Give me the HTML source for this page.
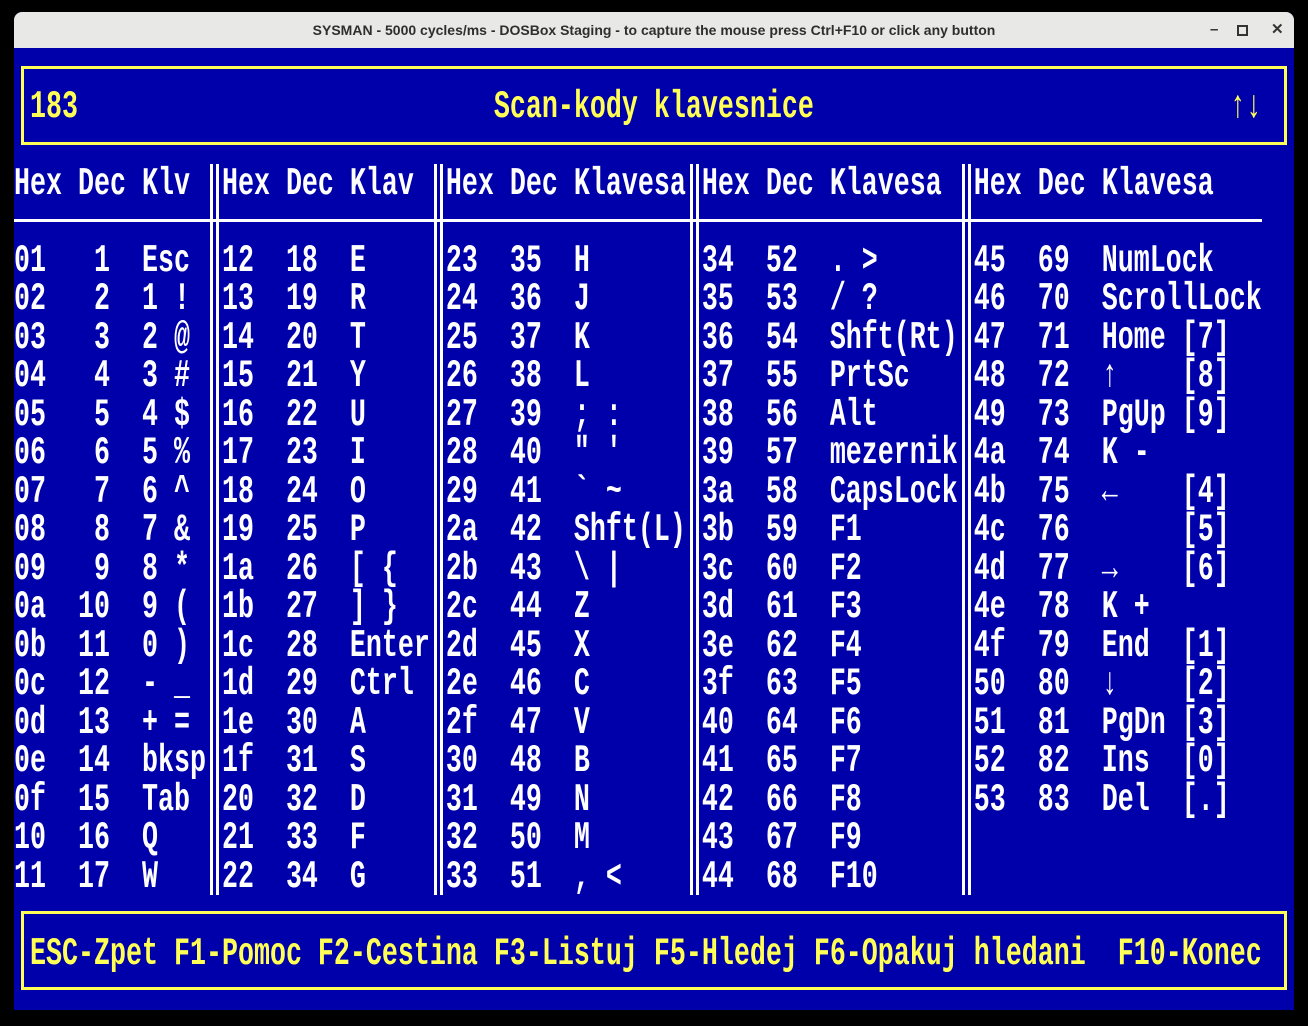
<!DOCTYPE html>
<html><head><meta charset="utf-8"><style>
html,body{margin:0;padding:0;background:#000;width:1308px;height:1026px;overflow:hidden}
#win{position:absolute;left:14px;top:12px;width:1280px;height:998px;border-radius:8px 8px 0 0;overflow:hidden;background:#0000aa}
#tb{position:absolute;left:0;top:0;width:1280px;height:36px;background:#e8e8e7;font:bold 14px "Liberation Sans",sans-serif;color:#2e2e2e;text-align:center;line-height:36px}
.btn{position:absolute;top:0;font:bold 15px "Liberation Sans",sans-serif;color:#333;line-height:36px}
.r{position:absolute;left:14px;height:38.5px;line-height:38.5px;white-space:pre;font:bold 26.6667px "Liberation Mono",monospace;color:#fff;transform:translateY(8px) scaleY(1.45);transform-origin:center}
.y{color:#ffff55}
.l{position:absolute;background:#fff}
.b{position:absolute;background:#ffff55}
</style></head><body>
<div id="win">
<div id="tb">SYSMAN - 5000 cycles/ms - DOSBox Staging - to capture the mouse press Ctrl+F10 or click any button</div>
<div class="btn" style="left:1196px">&#8211;</div>
<div class="btn" style="left:1223px;top:13px;width:7px;height:7px;border:2px solid #333;line-height:0"></div>
<div class="btn" style="left:1257px">&#10005;</div>
</div>
<div class="b" style="left:21px;top:66px;width:1266px;height:3px"></div>
<div class="b" style="left:21px;top:142px;width:1266px;height:3px"></div>
<div class="b" style="left:21px;top:66px;width:3px;height:79px"></div>
<div class="b" style="left:1284px;top:66px;width:3px;height:79px"></div>
<div class="b" style="left:21px;top:911px;width:1266px;height:3px"></div>
<div class="b" style="left:21px;top:987px;width:1266px;height:3px"></div>
<div class="b" style="left:21px;top:911px;width:3px;height:79px"></div>
<div class="b" style="left:1284px;top:911px;width:3px;height:79px"></div>
<div class="l" style="left:14px;top:219px;width:1248px;height:3px"></div>
<div class="l" style="left:210px;top:164px;width:3px;height:731px"></div>
<div class="l" style="left:216px;top:164px;width:3px;height:731px"></div>
<div class="l" style="left:434px;top:164px;width:3px;height:731px"></div>
<div class="l" style="left:440px;top:164px;width:3px;height:731px"></div>
<div class="l" style="left:690px;top:164px;width:3px;height:731px"></div>
<div class="l" style="left:696px;top:164px;width:3px;height:731px"></div>
<div class="l" style="left:962px;top:164px;width:3px;height:731px"></div>
<div class="l" style="left:968px;top:164px;width:3px;height:731px"></div>

<div class="r y" style="top:86.5px"> 183                          Scan-kody klavesnice                          ↑↓</div>
<div class="r" style="top:163.5px">Hex Dec Klv  Hex Dec Klav  Hex Dec Klavesa Hex Dec Klavesa  Hex Dec Klavesa</div>
<div class="r" style="top:240.5px">01   1  Esc  12  18  E     23  35  H       34  52  . &gt;      45  69  NumLock</div>
<div class="r" style="top:279px">02   2  1 !  13  19  R     24  36  J       35  53  / ?      46  70  ScrollLock</div>
<div class="r" style="top:317.5px">03   3  2 @  14  20  T     25  37  K       36  54  Shft(Rt) 47  71  Home [7]</div>
<div class="r" style="top:356px">04   4  3 #  15  21  Y     26  38  L       37  55  PrtSc    48  72  ↑    [8]</div>
<div class="r" style="top:394.5px">05   5  4 $  16  22  U     27  39  ; :     38  56  Alt      49  73  PgUp [9]</div>
<div class="r" style="top:433px">06   6  5 %  17  23  I     28  40  " '     39  57  mezernik 4a  74  K -</div>
<div class="r" style="top:471.5px">07   7  6 ^  18  24  O     29  41  ` ~     3a  58  CapsLock 4b  75  ←    [4]</div>
<div class="r" style="top:510px">08   8  7 &amp;  19  25  P     2a  42  Shft(L) 3b  59  F1       4c  76       [5]</div>
<div class="r" style="top:548.5px">09   9  8 *  1a  26  [ {   2b  43  \ |     3c  60  F2       4d  77  →    [6]</div>
<div class="r" style="top:587px">0a  10  9 (  1b  27  ] }   2c  44  Z       3d  61  F3       4e  78  K +</div>
<div class="r" style="top:625.5px">0b  11  0 )  1c  28  Enter 2d  45  X       3e  62  F4       4f  79  End  [1]</div>
<div class="r" style="top:664px">0c  12  - _  1d  29  Ctrl  2e  46  C       3f  63  F5       50  80  ↓    [2]</div>
<div class="r" style="top:702.5px">0d  13  + =  1e  30  A     2f  47  V       40  64  F6       51  81  PgDn [3]</div>
<div class="r" style="top:741px">0e  14  bksp 1f  31  S     30  48  B       41  65  F7       52  82  Ins  [0]</div>
<div class="r" style="top:779.5px">0f  15  Tab  20  32  D     31  49  N       42  66  F8       53  83  Del  [.]</div>
<div class="r" style="top:818px">10  16  Q    21  33  F     32  50  M       43  67  F9</div>
<div class="r" style="top:856.5px">11  17  W    22  34  G     33  51  , &lt;     44  68  F10</div>
<div class="r y" style="top:933.5px"> ESC-Zpet F1-Pomoc F2-Cestina F3-Listuj F5-Hledej F6-Opakuj hledani  F10-Konec</div>
</body></html>
